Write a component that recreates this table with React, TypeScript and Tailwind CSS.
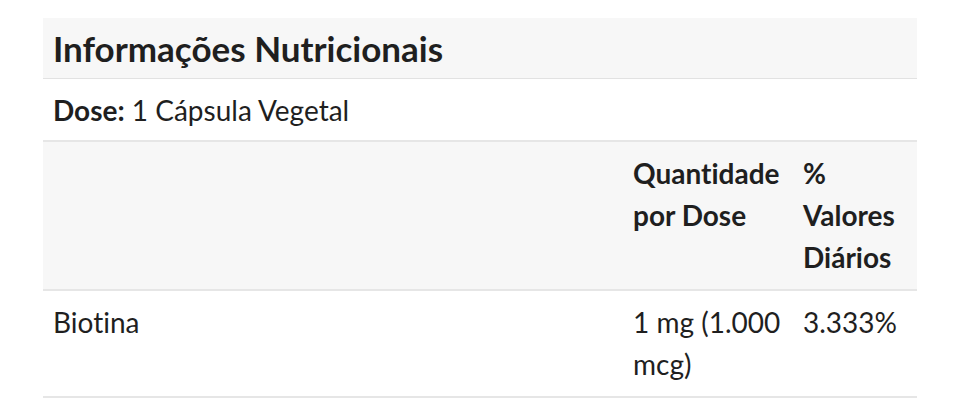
import React from 'react';

const rows = [{ name: 'Biotina', amount: '1 mg (1.000 mcg)', dv: '3.333%' }];

export default function App() {
  return (
    <div className="bg-white w-[961px] h-[418px] pt-[18px] pl-[43px] text-[#1f1f1f] [font-variant-ligatures:none] font-['Lato','Liberation_Sans',sans-serif]">
      <div className="w-[874px]">
        <div className="bg-[#f7f7f7] border-b border-[#e2e2e2] h-[61px] px-[10px] flex items-center">
          <h2 className="text-[35px] font-bold leading-[40px]">Informações Nutricionais</h2>
        </div>
        <div className="border-b-2 border-[#e6e6e6] h-[63px] px-[10px] flex items-center text-[28px] leading-[42px]">
          <span className="font-bold">Dose:</span>&nbsp;1 Cápsula Vegetal
        </div>
        <div className="grid grid-cols-[580px_170px_124px] bg-[#f7f7f7] border-b-2 border-[#e6e6e6] text-[28px] leading-[42px] font-bold">
          <div className="p-[10px]" />
          <div className="p-[10px]">Quantidade por Dose</div>
          <div className="p-[10px] pb-[11px]">% Valores Diários</div>
        </div>
        {rows.map((r) => (
          <div
            key={r.name}
            className="grid grid-cols-[580px_170px_124px] border-b-2 border-[#e6e6e6] text-[28px] leading-[42px]"
          >
            <div className="p-[10px]">{r.name}</div>
            <div className="p-[10px] pb-[11px]">{r.amount}</div>
            <div className="p-[10px]">{r.dv}</div>
          </div>
        ))}
      </div>
    </div>
  );
}
